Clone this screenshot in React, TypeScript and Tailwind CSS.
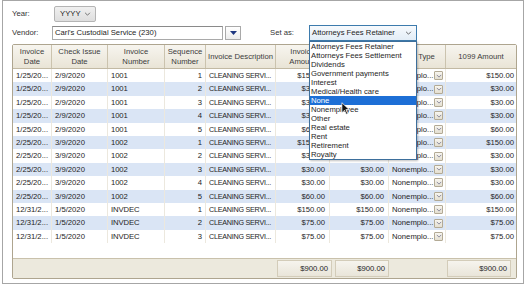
import React from 'react';

// 1099 vendor grid with the "Set as" combobox opened over it.

type Row = {
  inv: string;
  chk: string;
  num: string;
  seq: number;
  amt: string;
};

const ROWS: Row[] = [
  { inv: '1/25/20...', chk: '2/9/2020', num: '1001', seq: 1, amt: '$150.00' },
  { inv: '1/25/20...', chk: '2/9/2020', num: '1001', seq: 2, amt: '$30.00' },
  { inv: '1/25/20...', chk: '2/9/2020', num: '1001', seq: 3, amt: '$30.00' },
  { inv: '1/25/20...', chk: '2/9/2020', num: '1001', seq: 4, amt: '$30.00' },
  { inv: '1/25/20...', chk: '2/9/2020', num: '1001', seq: 5, amt: '$60.00' },
  { inv: '2/25/20...', chk: '3/9/2020', num: '1002', seq: 1, amt: '$150.00' },
  { inv: '2/25/20...', chk: '3/9/2020', num: '1002', seq: 2, amt: '$30.00' },
  { inv: '2/25/20...', chk: '3/9/2020', num: '1002', seq: 3, amt: '$30.00' },
  { inv: '2/25/20...', chk: '3/9/2020', num: '1002', seq: 4, amt: '$30.00' },
  { inv: '2/25/20...', chk: '3/9/2020', num: '1002', seq: 5, amt: '$60.00' },
  { inv: '12/31/2...', chk: '1/5/2020', num: 'INVDEC', seq: 1, amt: '$150.00' },
  { inv: '12/31/2...', chk: '1/5/2020', num: 'INVDEC', seq: 2, amt: '$75.00' },
  { inv: '12/31/2...', chk: '1/5/2020', num: 'INVDEC', seq: 3, amt: '$75.00' },
];

const OPTIONS = [
  'Attorneys Fees Retainer',
  'Attorneys Fees Settlement',
  'Dividends',
  'Government payments',
  'Interest',
  'Medical/Health care',
  'None',
  'Nonemployee',
  'Other',
  'Real estate',
  'Rent',
  'Retirement',
  'Royalty',
];

const COLS =
  'grid grid-cols-[39px_56px_57px_41px_70px_54px_59px_57px_70px]';

function Chevron({ className }: { className?: string }) {
  return (
    <svg viewBox="0 0 8 5" className={className} fill="none" stroke="currentColor" strokeWidth="1">
      <path d="M1 1 L4 4 L7 1" />
    </svg>
  );
}

function HeadCell({ children, last }: { children: React.ReactNode; last?: boolean }) {
  return (
    <div
      className={`flex items-center justify-center px-[2px] text-center leading-[10px] text-[#3c3c3c] ${
        last ? '' : 'border-r border-r-[#cbc3ae]'
      }`}
    >
      {children}
    </div>
  );
}

function TypeButton() {
  return (
    <div className="grid h-[9px] w-[9px] shrink-0 place-items-center rounded-[1px] border border-[#b3aa95] bg-gradient-to-b from-[#f8f6f0] to-[#e4dfd1] text-[#6b6b8a]">
      <Chevron className="h-[4px] w-[6px]" />
    </div>
  );
}

export default function App() {
  return (
    <div className="relative h-[288px] w-[528px] bg-white font-['Liberation_Sans',Arial,sans-serif] text-[7.7px] text-[#1e1e1e]">
      <div className="ml-[2px] flex h-[284px] w-[522px] flex-col border border-[#a6a6a6] pl-[9px]">
        {/* Year */}
        <div className="mt-[5px] flex h-[16px] items-center">
          <span className="w-[42px] text-[#333]">Year:</span>
          <div className="flex h-[16px] w-[42px] items-center justify-between rounded-[2px] border border-[#b4b4b4] bg-gradient-to-b from-[#f0f0f0] to-[#dedede] pl-[5px] pr-[4px]">
            <span>YYYY</span>
            <Chevron className="h-[4px] w-[7px] text-[#555]" />
          </div>
        </div>

        {/* Vendor + Set as */}
        <div className="mt-[3px] flex h-[16px] items-center">
          <span className="w-[40px] text-[#333]">Vendor:</span>
          <div className="flex h-[14px] w-[171px] items-center border border-[#a9a9a9] border-t-[#8a8a8a] bg-white pl-[2px]">
            Carl&apos;s Custodial Service (230)
          </div>
          <div className="ml-[2px] grid h-[14px] w-[16px] place-items-center border border-[#a9a9a9] bg-gradient-to-b from-white to-[#ececec]">
            <svg viewBox="0 0 7 4" className="h-[4px] w-[7px]">
              <path d="M0 0 H7 L3.5 4 Z" fill="#1d3680" />
            </svg>
          </div>
          <span className="ml-[29px] w-[39px] text-[#333]">Set as:</span>
          <div className="flex h-[16px] w-[108px] items-center justify-between border border-[#3d7bad] bg-gradient-to-b from-[#f7fafd] to-[#e3edf7] pl-[2px] pr-[4px]">
            <span>Attorneys Fees Retainer</span>
            <Chevron className="h-[4px] w-[7px] text-[#444]" />
          </div>
        </div>

        {/* Grid */}
        <div className="mt-[3px] flex h-[235px] w-[505px] flex-col rounded-[2px] border border-[#aea58f] bg-white">
          <div className={`${COLS} h-[24px] border-b border-b-[#c2b9a3] bg-gradient-to-b from-[#f7f5ef] to-[#e9e4d6]`}>
            <HeadCell>Invoice<br />Date</HeadCell>
            <HeadCell>Check Issue<br />Date</HeadCell>
            <HeadCell>Invoice<br />Number</HeadCell>
            <HeadCell>Sequence<br />Number</HeadCell>
            <HeadCell>Invoice Description</HeadCell>
            <HeadCell>Invoice<br />Amount</HeadCell>
            <HeadCell>Paid<br />Amount</HeadCell>
            <HeadCell>1099 Type</HeadCell>
            <HeadCell last>1099 Amount</HeadCell>
          </div>

          {ROWS.map((r, i) => (
            <div
              key={i}
              className={`${COLS} h-[13.4px] items-stretch leading-[13.4px] ${
                i % 2 === 1 ? 'bg-[#dae5f5]' : 'bg-white'
              }`}
            >
              <div className="overflow-hidden whitespace-nowrap border-r border-r-[#ece8de] pl-[3px]">{r.inv}</div>
              <div className="overflow-hidden whitespace-nowrap border-r border-r-[#ece8de] pl-[3px]">{r.chk}</div>
              <div className="overflow-hidden whitespace-nowrap border-r border-r-[#ece8de] pl-[3px] tracking-[-0.1px]">{r.num}</div>
              <div className="border-r border-r-[#ece8de] pr-[3px] text-right">{r.seq}</div>
              <div className="whitespace-nowrap border-r border-r-[#ece8de] pl-[3px] text-[7.2px] tracking-[-0.25px]">CLEANING SERVI...</div>
              <div className="border-r border-r-[#ece8de] pr-[4px] text-right">{r.amt}</div>
              <div className="border-r border-r-[#ece8de] pr-[4px] text-right">{r.amt}</div>
              <div className="flex items-center border-r border-r-[#ece8de] pl-[3px] pr-[2px]">
                <span className="flex-1 overflow-hidden whitespace-nowrap">Nonemplo...</span>
                <TypeButton />
              </div>
              <div className="pr-[2px] text-right">{r.amt}</div>
            </div>
          ))}

          <div className="flex-1" />

          {/* Totals */}
          <div className="flex h-[20px] items-center border-t border-t-[#c9c1ab] bg-[#ece9dd] pl-[264px]">
            <div className="h-[17px] w-[55px] border border-[#d3ccb9] bg-gradient-to-b from-[#f6f4ee] to-[#e9e5d9] pr-[3px] text-right leading-[15px]">$900.00</div>
            <div className="ml-[3px] h-[17px] w-[54px] border border-[#d3ccb9] bg-gradient-to-b from-[#f6f4ee] to-[#e9e5d9] pr-[3px] text-right leading-[15px]">$900.00</div>
            <div className="ml-[58px] h-[17px] w-[64px] border border-[#d3ccb9] bg-gradient-to-b from-[#f6f4ee] to-[#e9e5d9] pr-[3px] text-right leading-[15px]">$900.00</div>
          </div>
        </div>
      </div>

      {/* Open list of the Set as combobox */}
      <div className="absolute left-[309px] top-[41px] w-[108px] border border-[#3d6f9c] bg-white shadow-[1px_1px_2px_rgba(0,0,0,0.25)]">
        {OPTIONS.map((o) => (
          <div
            key={o}
            className={`h-[9px] whitespace-nowrap pl-[1px] leading-[9px] ${
              o === 'None' ? 'bg-[#1d6fd6] text-white' : ''
            }`}
          >
            {o}
          </div>
        ))}
      </div>

      {/* Mouse pointer */}
      <svg viewBox="0 0 12 18" className="absolute left-[341px] top-[102px] h-[13px] w-[9px]">
        <path d="M1 1 V15 L4.5 11.5 L7 17 L9 16 L6.5 10.5 H11 Z" fill="#111" stroke="#fff" strokeWidth="1" />
      </svg>
    </div>
  );
}
